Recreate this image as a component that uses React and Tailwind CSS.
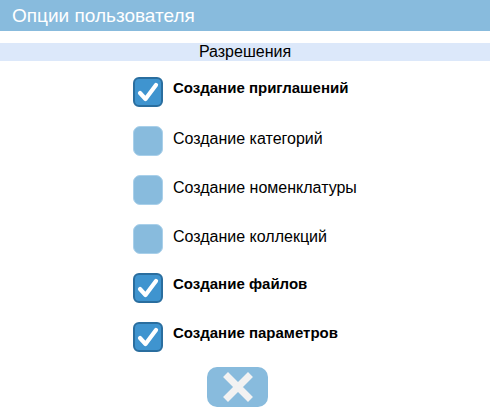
import React from 'react';

const permissions = [
  { label: 'Создание приглашений', checked: true },
  { label: 'Создание категорий', checked: false },
  { label: 'Создание номенклатуры', checked: false },
  { label: 'Создание коллекций', checked: false },
  { label: 'Создание файлов', checked: true },
  { label: 'Создание параметров', checked: true },
];

const CheckBox = ({ checked }) =>
  checked ? (
    <div className="w-[30px] h-[30px] shrink-0 rounded-[6px] bg-[#3f94cf] border-2 border-[#2a6e9f] flex items-center justify-center">
      <svg width="22" height="22" viewBox="0 0 22 22">
        <path d="M3 12 L8.5 18 L19 4" fill="none" stroke="#fff" strokeWidth="4.2" strokeLinecap="round" strokeLinejoin="round" />
      </svg>
    </div>
  ) : (
    <div className="w-[30px] h-[30px] shrink-0 rounded-[7px] bg-[#88bbdd] border border-[#a9d0ea]" />
  );

export default function App() {
  return (
    <div className="w-[490px] h-[418px] bg-white overflow-hidden" style={{ fontFamily: '"Liberation Sans", Arial, sans-serif' }}>
      <div className="h-[31px] bg-[#88bbdd] flex items-center pl-[12px]">
        <span className="text-white text-[19px] leading-none">Опции пользователя</span>
      </div>
      <div className="mt-[12px] h-[18px] bg-[#dce8fa] flex items-center justify-center">
        <span className="text-black text-[16px] leading-none">Разрешения</span>
      </div>
      <div className="pl-[133px] pt-[16px] flex flex-col">
        {permissions.map((p) => (
          <div key={p.label} className="h-[49px] flex items-start">
            <CheckBox checked={p.checked} />
            <span
              className={`ml-[10px] text-black whitespace-nowrap ${
                p.checked ? 'font-bold text-[15px] leading-[16px] mt-[3px]' : 'text-[16px] leading-[18px] mt-[4px]'
              }`}
            >
              {p.label}
            </span>
          </div>
        ))}
      </div>
      <div className="pl-[207px] -mt-[4px]">
        <button className="w-[61px] h-[40px] rounded-[10px] bg-[#88bbdd] flex items-center justify-center">
          <svg width="30" height="30" viewBox="0 0 30 30">
            <path d="M5 5 L25 25 M25 5 L5 25" stroke="#f2f2f2" strokeWidth="7" strokeLinecap="square" />
          </svg>
        </button>
      </div>
    </div>
  );
}
